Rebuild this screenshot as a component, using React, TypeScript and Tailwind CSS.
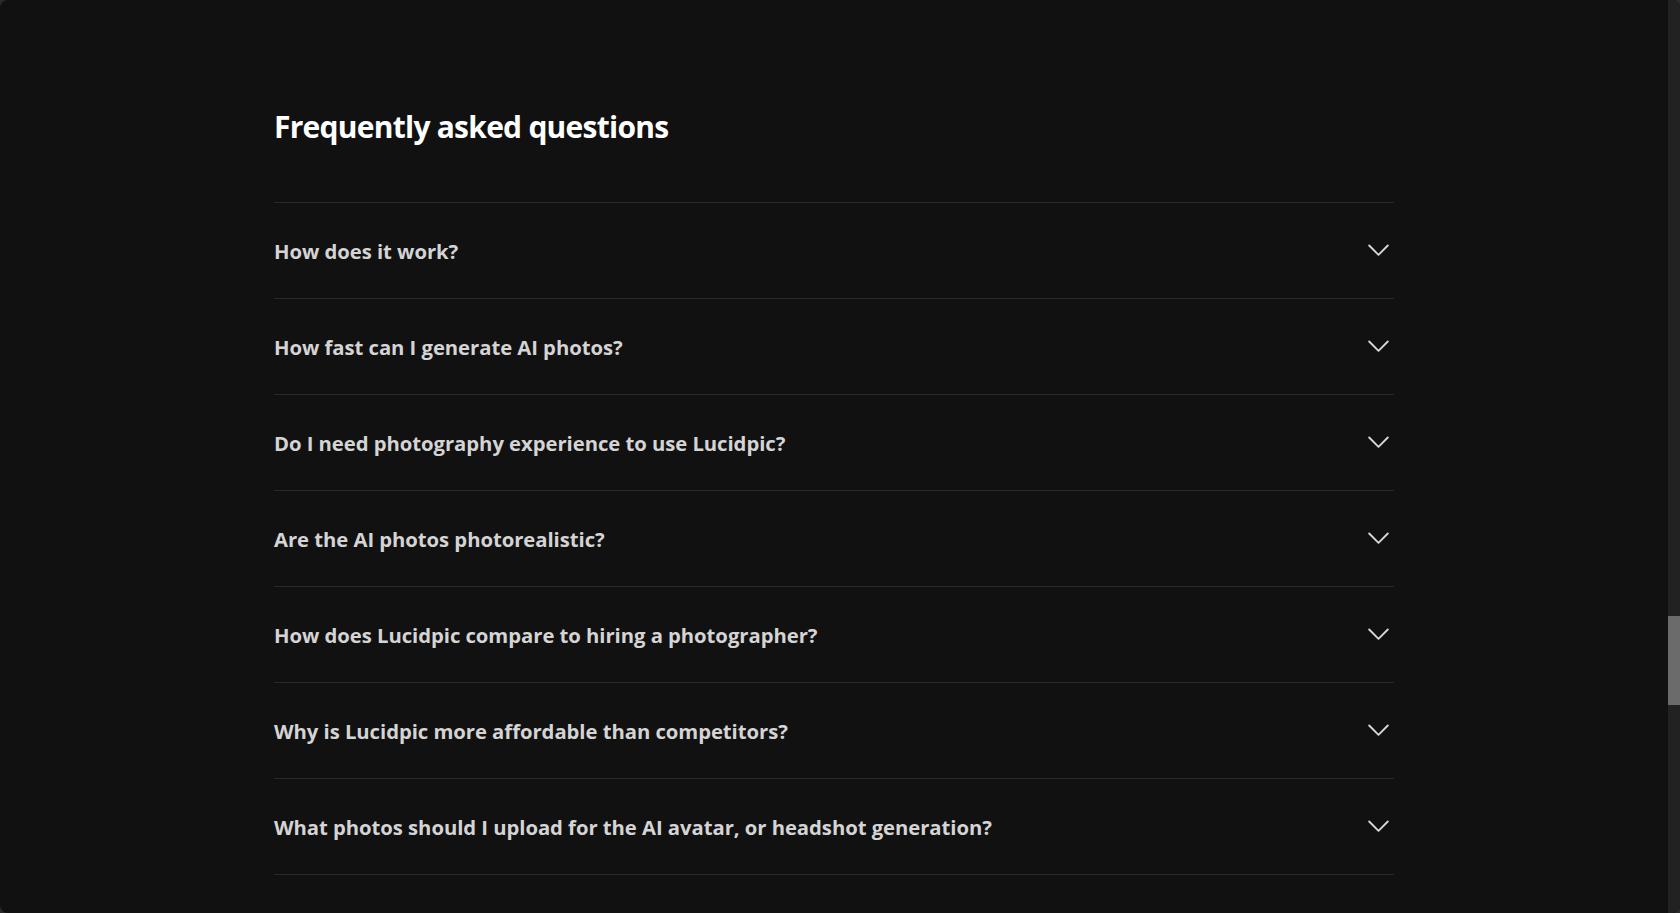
import React from "react";

const questions = [
  "How does it work?",
  "How fast can I generate AI photos?",
  "Do I need photography experience to use Lucidpic?",
  "Are the AI photos photorealistic?",
  "How does Lucidpic compare to hiring a photographer?",
  "Why is Lucidpic more affordable than competitors?",
  "What photos should I upload for the AI avatar, or headshot generation?",
];

function Chevron() {
  return (
    <svg width="21" height="13" viewBox="0 0 21 13" fill="none" className="shrink-0">
      <polyline points="1.2,1.5 10.5,10.8 19.8,1.5" stroke="#d6d6d6" strokeWidth="1.9" strokeLinecap="round" strokeLinejoin="round" />
    </svg>
  );
}

export default function App() {
  return (
    <div className="h-screen w-full overflow-hidden bg-[#2b2b2b]">
      <div
        className="flex h-full w-full overflow-hidden rounded-[8px] bg-[#111111]"
        style={{ fontFamily: '"Segoe UI", "Open Sans", "Noto Sans", sans-serif' }}
      >
        <div className="flex-1 overflow-hidden">
          <div className="mx-auto w-[1120px] pt-[107px]">
            <h2 className="text-[30px] font-bold leading-[40px] tracking-[-0.75px] text-white">
              Frequently asked questions
            </h2>
            <div className="mt-[55px] border-t border-[#2a2a2a]">
              {questions.map((q) => (
                <div
                  key={q}
                  className="flex h-[96px] items-center justify-between border-b border-[#2a2a2a] pr-[5px]"
                >
                  <span className="text-[20.3px] font-bold leading-[28px] tracking-[-0.05px] text-[#d4d4d4]">{q}</span>
                  <Chevron />
                </div>
              ))}
            </div>
          </div>
        </div>
        <div className="flex w-[12px] flex-col bg-[#222222]">
          <div className="h-[616px]" />
          <div className="h-[89px] bg-[#6b6b6b]" />
          <div className="flex-1" />
        </div>
      </div>
    </div>
  );
}
